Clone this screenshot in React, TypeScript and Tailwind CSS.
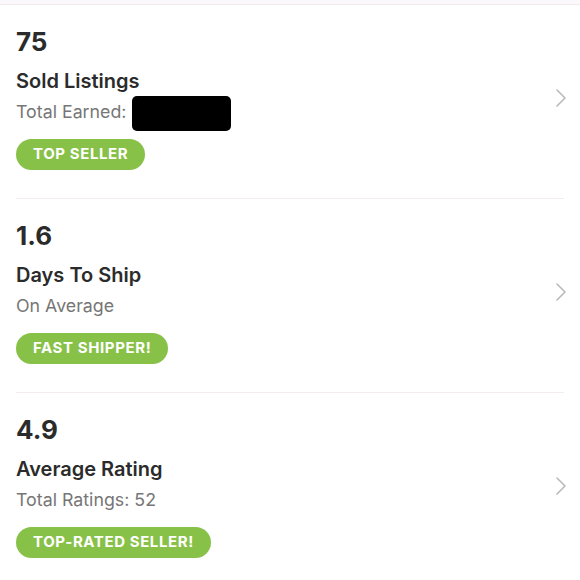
import React from 'react';

interface Stat {
  value: string;
  title: string;
  subtitle: string;
  badge: string;
  redacted?: boolean;
}

const stats: Stat[] = [
  { value: '75', title: 'Sold Listings', subtitle: 'Total Earned:', badge: 'TOP SELLER', redacted: true },
  { value: '1.6', title: 'Days To Ship', subtitle: 'On Average', badge: 'FAST SHIPPER!' },
  { value: '4.9', title: 'Average Rating', subtitle: 'Total Ratings: 52', badge: 'TOP-RATED SELLER!' },
];

const Chevron = () => (
  <svg width="14" height="20" viewBox="0 0 14 20" fill="none" className="shrink-0 -mr-[4px]">
    <polyline points="3,2 11,10 3,18" stroke="#b8b8b8" strokeWidth="1.6" strokeLinecap="round" strokeLinejoin="round" />
  </svg>
);

const StatRow: React.FC<{ stat: Stat; last: boolean }> = ({ stat, last }) => (
  <div className="px-4">
    <div className={`flex items-center pt-[21px] pb-[28px] ${last ? '' : 'border-b border-[#f3edf0]'}`}>
      <div className="flex-1 flex flex-col items-start">
        <div className="text-[26px] leading-[32px] font-bold text-[#2b2b2b]">{stat.value}</div>
        <div className="mt-[10px] text-[20px] leading-[26px] font-semibold text-[#2b2b2b]">{stat.title}</div>
        <div className="mt-[2px] h-[35px] flex items-center gap-[6px] text-[17.8px] leading-[24px] text-[#767676]">
          <span className="-mt-[3px]">{stat.subtitle}</span>
          {stat.redacted && <div className="w-[99px] h-[35px] bg-black rounded-[5px]" />}
        </div>
        <div className="mt-2 h-[31px] px-[17px] flex items-center rounded-full bg-[#88c148] text-white text-[15px] font-bold tracking-[0.6px]">
          {stat.badge}
        </div>
      </div>
      <Chevron />
    </div>
  </div>
);

export default function App() {
  return (
    <div className="w-[580px] h-[580px] bg-white overflow-hidden" style={{ fontFamily: 'Inter, "Open Sans", sans-serif' }}>
      <div className="h-[5px] bg-[#fbf8fb] border-b border-[#f1ebf0]" />
      {stats.map((s, i) => (
        <StatRow key={s.title} stat={s} last={i === stats.length - 1} />
      ))}
    </div>
  );
}
